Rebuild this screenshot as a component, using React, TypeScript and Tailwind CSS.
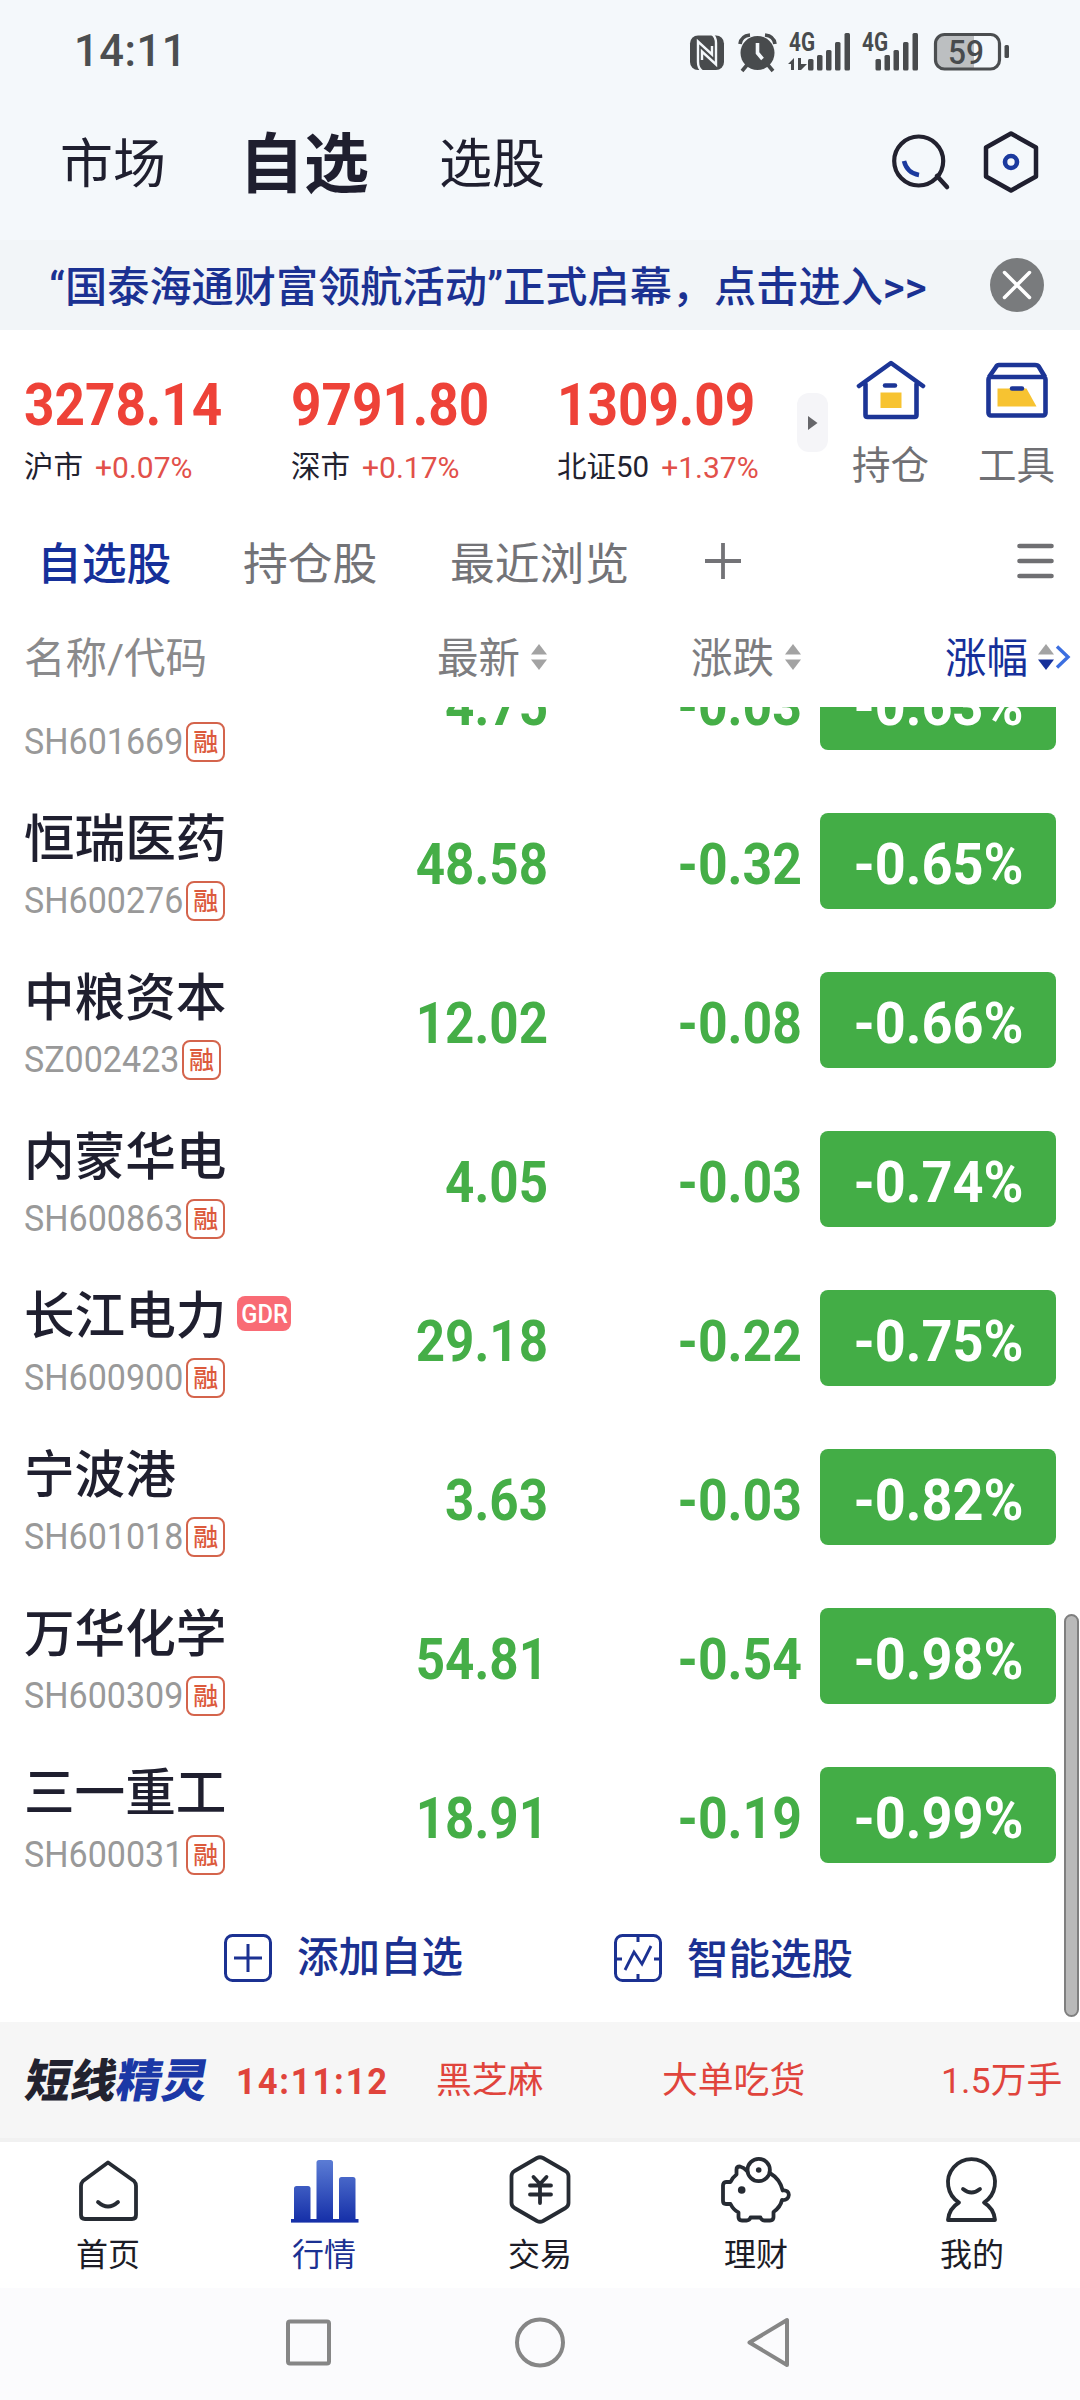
import type { ReactNode } from 'react';
import clsx from 'clsx';

type Stock = {
  name: string;
  code: string;
  price: string;
  change: string;
  percent: string;
  gdr?: boolean;
};

const INDEXES = [
  { name: '沪市', value: '3278.14', percent: '+0.07%', width: 'w-[267px]' },
  { name: '深市', value: '9791.80', percent: '+0.17%', width: 'w-[266px]' },
  { name: '北证50', value: '1309.09', percent: '+1.37%', width: 'w-[240px]' },
];

const STOCKS: Stock[] = [
  { name: '', code: 'SH601669', price: '4.75', change: '-0.03', percent: '-0.63%' },
  { name: '恒瑞医药', code: 'SH600276', price: '48.58', change: '-0.32', percent: '-0.65%' },
  { name: '中粮资本', code: 'SZ002423', price: '12.02', change: '-0.08', percent: '-0.66%' },
  { name: '内蒙华电', code: 'SH600863', price: '4.05', change: '-0.03', percent: '-0.74%' },
  { name: '长江电力', code: 'SH600900', price: '29.18', change: '-0.22', percent: '-0.75%', gdr: true },
  { name: '宁波港', code: 'SH601018', price: '3.63', change: '-0.03', percent: '-0.82%' },
  { name: '万华化学', code: 'SH600309', price: '54.81', change: '-0.54', percent: '-0.98%' },
  { name: '三一重工', code: 'SH600031', price: '18.91', change: '-0.19', percent: '-0.99%' },
];

function StatusBar() {
  return (
    <div className="flex h-[104px] items-center justify-between pl-[74px] pr-[70px]">
      <span className="text-[43.500px] font-medium leading-none tracking-[0.5px] text-[#4b4e50]">14:11</span>
      <svg width="322" height="48" viewBox="688 27 322 48" fill="#484b4d" className="overflow-visible">
        {/* NFC */}
        <rect x="690" y="34.500" width="34" height="34.500" rx="8" />
        <path d="M702 70q-4-3-4-9V40.500l14 13V45M712 33q4 3 4 9v21.500l-14-13V59" fill="none" stroke="#f4f8fb" strokeWidth="2.400" />
        {/* alarm */}
        <circle cx="757.500" cy="52" r="17" />
        <path d="M740 43q1-8 10-9M775 43q-1-8-10-9M747 64l-5 6M768 64l5 6" fill="none" stroke="#484b4d" strokeWidth="3.600" />
        <path d="M757.500 42v10l5 6" fill="none" stroke="#f4f8fb" strokeWidth="3.600" />
        {/* sim 1 */}
        <text x="789" y="50" fontSize="25" fontWeight="700" textLength="26" lengthAdjust="spacingAndGlyphs">4G</text>
        <path d="M788 63l6-6v12h-3v-6zM798 57h3v6h6l-6 6h-3z" />
        <rect x="808" y="58" width="5.500" height="11.500" rx="1.500" />
        <rect x="817" y="54" width="5.500" height="15.500" rx="1.500" />
        <rect x="826" y="49" width="5.500" height="20.500" rx="1.500" />
        <rect x="835" y="41" width="5.500" height="28.500" rx="1.500" />
        <rect x="844.500" y="32" width="5.500" height="37.500" rx="1.500" />
        {/* sim 2 */}
        <text x="862" y="50" fontSize="25" fontWeight="700" textLength="26" lengthAdjust="spacingAndGlyphs">4G</text>
        <rect x="875.500" y="58" width="5.500" height="11.500" rx="1.500" />
        <rect x="884.500" y="54" width="5.500" height="15.500" rx="1.500" />
        <rect x="893.500" y="49" width="5.500" height="20.500" rx="1.500" />
        <rect x="903" y="41" width="5.500" height="28.500" rx="1.500" />
        <rect x="912.500" y="32" width="5.500" height="37.500" rx="1.500" />
        {/* battery */}
        <path d="M943 34h31v34h-31q-7 0-7-8V42q0-8 7-8z" fill="#bcbfc1" />
        <rect x="935.500" y="33.500" width="64" height="34.500" rx="9" fill="none" stroke="#4b4e50" strokeWidth="3.200" />
        <rect x="1004.500" y="44" width="4.500" height="13" rx="1.500" />
        <text x="948" y="63" fontSize="34" fontWeight="500" textLength="36" lengthAdjust="spacingAndGlyphs">59</text>
      </svg>
    </div>
  );
}

function Header() {
  return (
    <header className="flex h-[136px] items-start pl-[60px] pr-[40px] text-[#1f1f2f]">
      <span className="mt-[26px] w-[179px] text-[53px] leading-[70px]">市场</span>
      <span className="mt-[21px] w-[200px] text-[65px] font-bold leading-[80px]">自选</span>
      <span className="mt-[26px] text-[53px] leading-[70px]">选股</span>
      <div className="ml-auto mt-[25px] flex gap-[30px]">
        <svg width="62" height="66" viewBox="890 129 62 66" fill="none">
          <circle cx="918.700" cy="161" r="24.500" stroke="#22222f" strokeWidth="4.200" />
          <path d="M937 176l10 11" stroke="#22222f" strokeWidth="4.500" strokeLinecap="round" />
          <path d="M904 161q3 12 15 14" stroke="#1b3a9e" strokeWidth="4.500" />
        </svg>
        <svg width="58" height="66" viewBox="982 129 58 66" fill="none">
          <path d="M1011 133.500l25 14v29l-25 14-25-14v-29z" stroke="#1f1f2f" strokeWidth="4.500" strokeLinejoin="round" />
          <circle cx="1011" cy="162" r="6" stroke="#1b3a9e" strokeWidth="4.600" />
        </svg>
      </div>
    </header>
  );
}

function Banner() {
  return (
    <div className="flex h-[90px] items-center justify-between bg-[#f2f5f8] pl-[49px] pr-[36px]">
      <span className="whitespace-nowrap pt-[6px] text-[42.200px] font-medium leading-[60px] text-[#1b3192]">
        “国泰海通财富领航活动”正式启幕，点击进入&gt;&gt;
      </span>
      <svg width="54" height="54" viewBox="0 0 54 54">
        <circle cx="27" cy="27" r="27" fill="#797b7d" />
        <path d="M14.500 14.500l25 25M39.500 14.500l-25 25" stroke="#fff" strokeWidth="3.500" strokeLinecap="round" />
      </svg>
    </div>
  );
}

function Indexes() {
  return (
    <section className="flex h-[170px] pl-[24px]">
      {INDEXES.map((item) => (
        <div key={item.name} className={clsx('shrink-0 pt-[45px]', item.width)}>
          <div className="origin-left scale-x-[0.9] text-[59px] font-bold leading-[60px] text-[#ee4238]">
            {item.value}
          </div>
          <div className="mt-[17px] flex h-[32px] items-center gap-[12px] whitespace-nowrap text-[29.500px] leading-none">
            <span className="text-[#22222f]">{item.name}</span>
            <span className="text-[30px] text-[#e2504a]">{item.percent}</span>
          </div>
        </div>
      ))}
      <div className="mt-[63px] flex h-[59px] w-[31px] shrink-0 items-center justify-center rounded-xl bg-[#f5f5f8]">
        <svg width="10" height="16" viewBox="0 0 10 16">
          <path d="M0 1l9.500 7L0 15z" fill="#66666a" />
        </svg>
      </div>
      <div className="flex pl-[24px] pt-[30px] text-[38.500px] leading-[48px] text-[#707074]">
        <div className="flex w-[77px] flex-col items-center">
          <svg width="70" height="62" viewBox="856 360 70 62" fill="none">
            <path d="M859 386l32-23 32 23M865.500 384v31q0 2 2 2h47q2 0 2-2v-31" stroke="#1c3596" strokeWidth="4.600" strokeLinecap="round" strokeLinejoin="round" />
            <path d="M885 385.500h10" stroke="#1c3596" strokeWidth="4.500" strokeLinecap="round" />
            <rect x="880.500" y="392.500" width="21" height="15.500" fill="#f7c331" />
          </svg>
          <span className="mt-[20px] whitespace-nowrap">持仓</span>
        </div>
        <div className="ml-[49px] flex w-[77px] flex-col items-center">
          <svg width="64" height="62" viewBox="985 360 64 62" fill="none">
            <path d="M989 377l7-10q1-2 3-2h36q3 0 4 2l6 10" stroke="#1c3596" strokeWidth="4.600" strokeLinejoin="round" />
            <rect x="988.500" y="377" width="57" height="38.500" rx="2.500" stroke="#1c3596" strokeWidth="4.600" />
            <path d="M997.500 388.500h29l10 18h-39z" fill="#f7c331" />
            <path d="M1012 388.500h10" stroke="#1c3596" strokeWidth="4.500" strokeLinecap="round" />
          </svg>
          <span className="mt-[20px] whitespace-nowrap">工具</span>
        </div>
      </div>
    </section>
  );
}

function GroupTabs() {
  return (
    <nav className="flex h-[126px] items-center pl-[37px] pr-[26px] pt-[3px] text-[44.800px] leading-[60px] text-[#737377]">
      <span className="w-[206px] font-medium text-[#16309a]">自选股</span>
      <span className="w-[207px]">持仓股</span>
      <span className="w-[255px]">最近浏览</span>
      <svg width="36" height="36" viewBox="0 0 36 36" className="mb-2">
        <path d="M18 0v36M0 18h36" stroke="#737377" strokeWidth="3.800" />
      </svg>
      <svg width="37" height="36" viewBox="0 0 37 36" className="mb-2 ml-auto">
        <path d="M2.500 3h32M2.500 18h32M2.500 33h32" stroke="#6f6f72" strokeWidth="4.600" strokeLinecap="round" />
      </svg>
    </nav>
  );
}

function SortArrows({ down = false }: { down?: boolean }) {
  return (
    <svg width="16" height="26" viewBox="0 0 16 26" className="-mt-1">
      <path d="M0 10.500L8 0l8 10.500z" fill="#a3a3a3" />
      <path d="M0 15.500L8 26l8-10.500z" fill={down ? '#16309a' : '#a3a3a3'} />
    </svg>
  );
}

function ColumnHeads() {
  return (
    <div className="flex h-[81px] items-center pb-[16px] pl-[24px] pr-[8px] text-[41.500px] leading-[60px] text-[#8a8a8c]">
      <span className="w-[413px]">名称/代码</span>
      <div className="flex w-[254px] items-center gap-[11px] text-[#7d7d80]">
        最新
        <SortArrows />
      </div>
      <div className="flex w-[254px] items-center gap-[11px] text-[#7d7d80]">
        涨跌
        <SortArrows />
      </div>
      <div className="flex items-center whitespace-nowrap text-[#16309a]">
        <span className="mr-[10px]">涨幅</span>
        <SortArrows down />
        <svg width="16" height="24" viewBox="0 0 16 24" className="-mt-1 ml-[1px]">
          <path d="M2 1.500L13 12 2 22.500" fill="none" stroke="#3c6fe0" strokeWidth="3.400" />
        </svg>
      </div>
    </div>
  );
}

function StockRow({ stock }: { stock: Stock }) {
  return (
    <li className="flex h-[159px] items-start pl-[24px] pt-[10px]">
      <div className="w-[330px]">
        <div className="flex h-[49px] items-center whitespace-nowrap pt-[3px] text-[50.600px] font-medium leading-[49px] text-[#1f1f2f]">
          {stock.name}
          {stock.gdr && (
            <span className="-mt-[6px] ml-[11px] flex h-[35px] w-[54px] items-center justify-center rounded-lg bg-[#f96b75] pt-[3px] text-[25px] font-medium leading-none text-white">
              <span className="scale-x-[0.95]">GDR</span>
            </span>
          )}
        </div>
        <div className="mt-[19px] flex h-[39px] items-center">
          <span className="mr-[-11px] origin-left scale-x-[0.92] text-[37px] leading-none text-[#999]">{stock.code}</span>
          <span className="flex h-[40px] w-[39px] items-center justify-center rounded-lg border-2 border-[#d4644c] pt-[2px] text-[25px] font-medium leading-none text-[#dc5a3c]">
            融
          </span>
        </div>
      </div>
      <div className="w-[194px] origin-right scale-x-[0.89] pt-[22px] text-right text-[57.500px] font-bold leading-[60px] text-[#45ae47]">
        {stock.price}
      </div>
      <div className="w-[254px] origin-right scale-x-[0.9] pt-[22px] text-right text-[57.500px] font-bold leading-[60px] text-[#45ae47]">
        {stock.change}
      </div>
      <div className="ml-[18px] flex h-[96px] w-[236px] items-center justify-center rounded-lg bg-[#43ad46] pt-[7px] text-[57.500px] font-bold text-white">
        <span className="scale-x-[0.94] leading-none">{stock.percent}</span>
      </div>
    </li>
  );
}

function ListActions() {
  return (
    <div className="flex h-[84px] items-center text-[41.500px] font-medium leading-[60px] text-[#1b3192]">
      <button className="ml-[224px] flex w-[390px] items-center gap-[25px]">
        <svg width="48" height="48" viewBox="0 0 48 48" fill="none" stroke="#1b3192" strokeWidth="3">
          <rect x="1.500" y="1.500" width="45" height="45" rx="7" />
          <path d="M24 10v28M10 24h28" />
        </svg>
        添加自选
      </button>
      <button className="flex items-center gap-[25px]">
        <svg width="48" height="48" viewBox="0 0 48 48" fill="none" stroke="#1b3192" strokeWidth="3">
          <rect x="1.500" y="1.500" width="45" height="45" rx="7" />
          <path d="M24 2v6M24 40v6M2 25h6M40 25h6" />
          <path d="M11 36l9-18 8 12 9-18" strokeWidth="2.800" />
        </svg>
        <span className="pt-[3px]">智能选股</span>
      </button>
    </div>
  );
}

function Ticker() {
  return (
    <div className="flex h-[120px] items-center border-b-4 border-[#f1f1f1] bg-[#f6f6f6] pl-[26px] pt-[3px] text-[35.800px] text-[#e0443c]">
      <span className="flex w-[210px] -skew-x-[10deg] whitespace-nowrap text-[45.500px] font-black leading-[60px] text-[#22222f]">
        短线<span className="text-[#1b38a6]">精灵</span>
      </span>
      <span className="w-[200px] origin-left scale-x-[0.92] text-[37.500px] font-bold tracking-[2px]">14:11:12</span>
      <span className="w-[226px]">黑芝麻</span>
      <span className="w-[279px]">大单吃货</span>
      <span className="whitespace-nowrap">1.5万手</span>
    </div>
  );
}

function NavItem({ label, active = false, children }: { label: string; active?: boolean; children: ReactNode }) {
  return (
    <a className={clsx('flex w-[216px] flex-col items-center', active ? 'text-[#1b3192]' : 'text-[#1c1c26]')}>
      <svg
        width="72"
        height="72"
        viewBox="0 0 72 72"
        fill="none"
        stroke="#262b33"
        strokeWidth="3.800"
        strokeLinecap="round"
        strokeLinejoin="round"
      >
        {children}
      </svg>
      <span className="mt-[9px] text-[32px] leading-[40px]">{label}</span>
    </a>
  );
}

function BottomNav() {
  return (
    <nav className="flex h-[146px] bg-white pt-[12px]">
      <NavItem label="首页">
        <path d="M36 8.500L62 27q2 2 2 5v29q0 4-4 4H13q-4 0-4-4V32q0-3 2-5z" />
        <path d="M26 48q10 9 20 0" />
      </NavItem>
      <NavItem label="行情" active>
        <defs>
          <linearGradient id="bars" x1="0" y1="7" x2="0" y2="68" gradientUnits="userSpaceOnUse">
            <stop offset="0" stopColor="#5a7bd4" />
            <stop offset="1" stopColor="#152fa8" />
          </linearGradient>
        </defs>
        <g fill="url(#bars)" stroke="none">
          <rect x="6" y="32" width="16.500" height="35" rx="2.500" />
          <rect x="28.500" y="6" width="16.500" height="61" rx="2.500" />
          <rect x="51" y="23" width="16.500" height="44" rx="2.500" />
          <rect x="3" y="65" width="67.500" height="3.600" />
        </g>
      </NavItem>
      <NavItem label="交易">
        <path d="M33 4q3-1.500 6 0l22.500 13q3 2 3 5v27q0 3-3 5L39 67q-3 1.500-6 0L10.500 54q-3-2-3-5V22q0-3 3-5z" />
        <path d="M29.500 23l6.500 7 6.500-7M26 31.500h21M26 40.500h21M36 31v18" />
      </NavItem>
      <NavItem label="理财">
        <circle cx="38.700" cy="16" r="11.200" />
        <circle cx="38.700" cy="16" r="2.800" fill="#262b33" stroke="none" />
        <path d="M27 17q-3-3.500-7-4.500-3.500 0-3.500 3v5q-4 3-6 7.500H6q-3 0-3 3.500V47q0 3 3 3h4.500q3 6 8 8.500V63q0 3.500 3.500 3.500h4.500q3 0 4-3h10q1 3 4 3H50q3.500 0 3.500-3.500v-5q7-5 8.500-12c9 1 9-11 .7-9.500Q60 25 50.500 19.500" />
        <circle cx="21.700" cy="36" r="3.800" fill="#262b33" stroke="none" />
      </NavItem>
      <NavItem label="我的">
        <path d="M23 48.500A23.500 23.500 0 1 1 48 48.500q10 6 11 17.500H12q1-11.500 11-17.500z" />
        <path d="M27 35q8.500 7 17 0" />
      </NavItem>
    </nav>
  );
}

function SystemNav() {
  return (
    <div className="flex h-[112px] items-start justify-center gap-[179px] bg-[#fbfbfd] pt-[28px]">
      <svg width="52" height="52" viewBox="0 0 52 52" fill="none" stroke="#868686" strokeWidth="4">
        <rect x="5" y="5.500" width="41" height="42" rx="2" />
      </svg>
      <svg width="52" height="52" viewBox="0 0 52 52" fill="none" stroke="#868686" strokeWidth="4">
        <circle cx="26" cy="26.500" r="23" />
      </svg>
      <svg width="52" height="52" viewBox="0 0 52 52" fill="none" stroke="#868686" strokeWidth="4" strokeLinejoin="round">
        <path d="M42 4v45L4.500 26.500z" />
      </svg>
    </div>
  );
}

export default function App() {
  return (
    <div className="flex h-[2400px] w-[1080px] flex-col overflow-hidden bg-white font-['Roboto','Noto_Sans_CJK_SC',sans-serif]">
      <div className="bg-[#f4f8fb]">
        <StatusBar />
        <Header />
        <Banner />
      </div>
      <Indexes />
      <GroupTabs />
      <ColumnHeads />
      <main className="relative h-[1315px] overflow-hidden">
        <ul className="-mt-[63px]">
          {STOCKS.map((stock) => (
            <StockRow key={stock.code} stock={stock} />
          ))}
        </ul>
        <ListActions />
        {/* Scroll thumb */}
        <div className="absolute right-[1px] top-[907px] h-[403px] w-[15px] rounded-full border-2 border-[#7f7f7f] bg-[#b9b9b9]" />
      </main>
      <Ticker />
      <BottomNav />
      <SystemNav />
    </div>
  );
}
